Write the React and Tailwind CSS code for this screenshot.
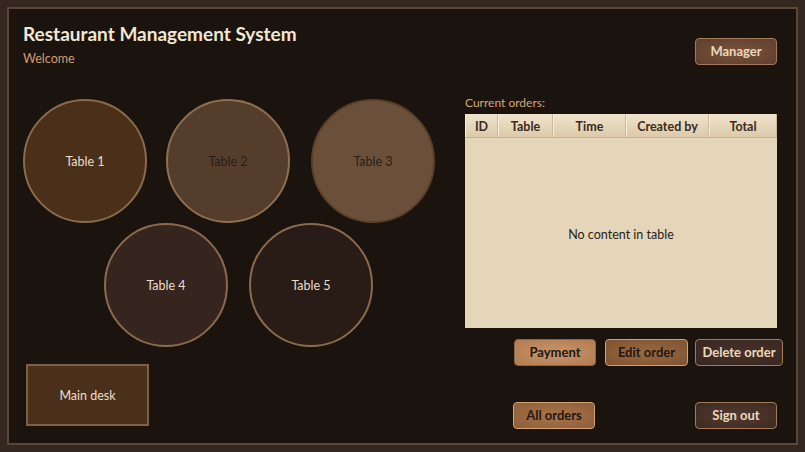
const TABLES_TOP = [
  { name: 'Table 1', cls: 'bg-[#4a3019] border-[#8b6b4b] text-[#eadfcc]' },
  { name: 'Table 2', cls: 'bg-[#553d2b] border-[#8f6f51] text-[#2a1e16]' },
  { name: 'Table 3', cls: 'bg-[#6a503a] border-[#5c4026] text-[#2a1e16]' },
];

const TABLES_BOTTOM = [
  { name: 'Table 4', cls: 'bg-[#35251e] border-[#8b6b4b] text-[#eadfcc]' },
  { name: 'Table 5', cls: 'bg-[#291b15] border-[#8b6b4b] text-[#eadfcc]' },
];

const COLUMNS = [
  { label: 'ID', w: 'w-[33px]' },
  { label: 'Table', w: 'w-[55px]' },
  { label: 'Time', w: 'w-[73px]' },
  { label: 'Created by', w: 'w-[83px]' },
  { label: 'Total', w: 'flex-1' },
];

const TableCircle = ({ name, cls }) => (
  <button
    type="button"
    className={`w-[124px] h-[124px] rounded-full border-2 flex items-center justify-center pt-[2px] text-[12.5px] ${cls}`}
  >
    {name}
  </button>
);

const Btn = ({ children, className }) => (
  <button
    type="button"
    className={`shrink-0 h-[27px] rounded-[4px] border font-bold text-[13px] flex items-center justify-center ${className}`}
  >
    {children}
  </button>
);

export default function App() {
  return (
    <div
      className="w-[805px] h-[452px] bg-[#33271f] p-[7px]"
      style={{ fontFamily: 'Lato, "Noto Sans", sans-serif' }}
    >
      <div className="h-full border-2 border-[#5c4637] bg-[#1b130e] flex">
        {/* Left side */}
        <div className="w-[448px] shrink-0 pl-[14px] pt-[13px] flex flex-col">
          <h1 className="text-[19px] font-bold text-[#f1e7d4] leading-[24px]">
            Restaurant Management System
          </h1>
          <p className="text-[12.5px] text-[#d49c6c] mt-[5px] leading-[16px]">Welcome</p>

          <div className="mt-[32px] flex">
            <TableCircle {...TABLES_TOP[0]} />
            <div className="ml-[19px]">
              <TableCircle {...TABLES_TOP[1]} />
            </div>
            <div className="ml-[21px]">
              <TableCircle {...TABLES_TOP[2]} />
            </div>
          </div>
          <div className="flex ml-[81px]">
            <TableCircle {...TABLES_BOTTOM[0]} />
            <div className="ml-[21px]">
              <TableCircle {...TABLES_BOTTOM[1]} />
            </div>
          </div>

          <button
            type="button"
            className="mt-[17px] ml-[3px] w-[123px] h-[62px] pt-[3px] bg-[#4a301a] border-2 border-[#7d6045] text-[12.5px] text-[#eadfcc] flex items-center justify-center"
          >
            Main desk
          </button>
        </div>

        {/* Right side */}
        <div className="w-[312px] shrink-0 ml-[8px] flex flex-col">
          <div className="mt-[29px] flex justify-end">
            <Btn className="w-[82px] bg-[radial-gradient(ellipse_at_center,#7a5236,#5e4030)] border-[#a37a58] text-[#ead8be]">
              Manager
            </Btn>
          </div>

          <p className="mt-[31px] text-[12px] text-[#d6a676] leading-[14px]">Current orders:</p>

          <div className="mt-[4px] h-[214px] bg-[#e5d5b9] flex flex-col">
            <div className="h-[24px] flex bg-[linear-gradient(#f0e4cd,#dccaa9)] border-b border-[#c8b494]">
              {COLUMNS.map((c) => (
                <div
                  key={c.label}
                  className={`${c.w} h-full pt-[3px] flex items-center justify-center text-[12.5px] font-bold text-[#3a2b1f] border-r border-[#cdb99a] border-l border-l-[#f5ecdc]`}
                >
                  {c.label}
                </div>
              ))}
            </div>
            <div className="flex-1 pt-[4px] flex items-center justify-center text-[12.5px] text-[#2a1e16]">
              No content in table
            </div>
          </div>

          <div className="mt-[11px] flex pl-[49px]">
            <Btn className="w-[82px] bg-[radial-gradient(ellipse_at_center,#c9946a,#b07c50)] border-[#8e6444] text-[#231710]">
              Payment
            </Btn>
            <Btn className="ml-[9px] w-[83px] bg-[radial-gradient(ellipse_at_center,#9a6a40,#7e5230)] border-[#d2a272] text-[#231710]">
              Edit order
            </Btn>
            <Btn className="ml-[7px] w-[88px] bg-[radial-gradient(ellipse_at_center,#47322a,#392720)] border-[#a37a58] text-[#ead8be]">
              Delete order
            </Btn>
          </div>

          <div className="mt-[36px] flex pl-[48px]">
            <Btn className="w-[82px] bg-[radial-gradient(ellipse_at_center,#a8744a,#8e5e38)] border-[#d2a272] text-[#231710]">
              All orders
            </Btn>
            <Btn className="ml-[100px] w-[82px] bg-[radial-gradient(ellipse_at_center,#52392e,#3e2a22)] border-[#a37a58] text-[#ead8be]">
              Sign out
            </Btn>
          </div>
        </div>
      </div>
    </div>
  );
}
